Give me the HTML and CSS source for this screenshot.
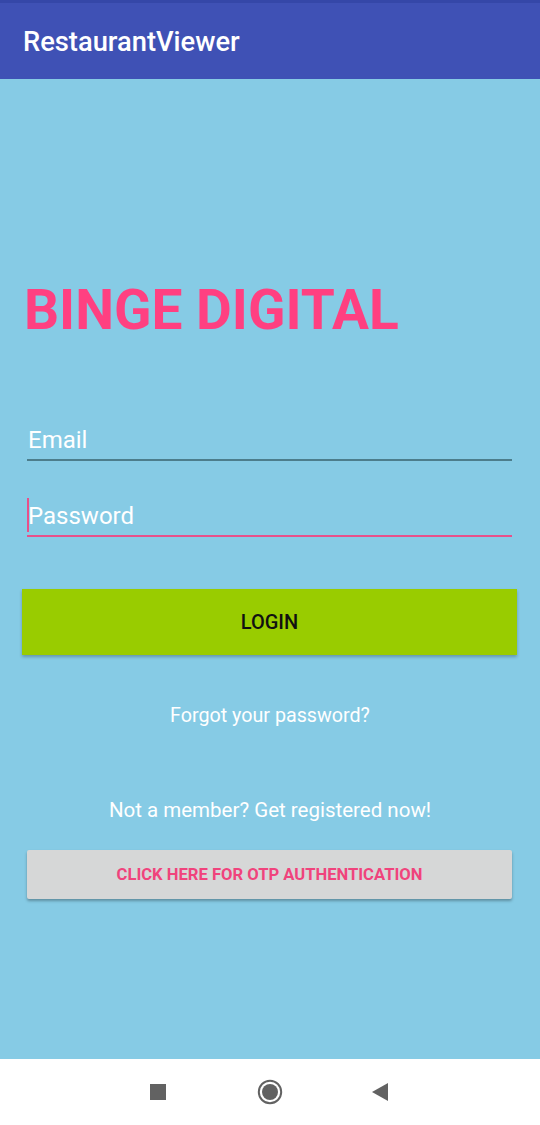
FILE: index.html
```html
<!DOCTYPE html>
<html lang="en">
<head>
<meta charset="utf-8">
<title>RestaurantViewer</title>
<link rel="stylesheet" href="styles.css">
</head>
<body>
<div class="screen">
  <header class="appbar">
    <h1 class="appbar-title">RestaurantViewer</h1>
  </header>
  <main class="content">
    <div class="brand">BINGE DIGITAL</div>
    <div class="field field-email"><span class="hint">Email</span></div>
    <div class="field field-password"><span class="cursor"></span><span class="hint">Password</span></div>
    <button class="btn-login" type="button">LOGIN</button>
    <div class="link link-forgot">Forgot your password?</div>
    <div class="link link-register">Not a member? Get registered now!</div>
    <button class="btn-otp" type="button">CLICK HERE FOR OTP AUTHENTICATION</button>
  </main>
  <nav class="navbar">
    <svg class="nav-icon nav-recent" width="18" height="18" viewBox="0 0 18 18"><rect x="1" y="1" width="16" height="16" fill="#626262"/></svg>
    <svg class="nav-icon nav-home" width="26" height="26" viewBox="0 0 26 26"><circle cx="13" cy="13" r="11.2" fill="none" stroke="#626262" stroke-width="2"/><circle cx="13" cy="13" r="8" fill="#626262"/></svg>
    <svg class="nav-icon nav-back" width="18" height="20" viewBox="0 0 18 20"><path d="M1 10 L17 1 L17 19 Z" fill="#626262"/></svg>
  </nav>
</div>
</body>
</html>
```

FILE: styles.css
```css
* { box-sizing: border-box; }
html, body { margin: 0; padding: 0; }
body {
  width: 540px;
  height: 1125px;
  font-family: Roboto, "Noto Sans", Arial, sans-serif;
  background: #ffffff;
}
.screen {
  display: flex;
  flex-direction: column;
  height: 1125px;
}
.appbar {
  height: 79px;
  background: #3f51b5;
  border-top: 3px solid #3547a8;
  display: flex;
  align-items: center;
  padding: 3px 0 0 23px;
  flex: 0 0 auto;
}
.appbar-title {
  margin: 0;
  color: #ffffff;
  font-size: 27.3px;
  font-weight: 500;
  line-height: 1;
  letter-spacing: 0;
}
.content {
  flex: 1 1 auto;
  background: #86cbe5;
  display: flex;
  flex-direction: column;
}
.brand {
  margin: 203px 0 0 24px;
  color: #ff4081;
  font-size: 55px;
  font-weight: 700;
  line-height: 57px;
}
.field {
  position: relative;
  margin: 89px 28px 0 27px;
  padding: 0 0 7px 1px;
  border-bottom: 2px solid #4c7d8c;
}
.field-password {
  margin-top: 43px;
  border-bottom-color: #e8508a;
}
.hint {
  display: block;
  color: #ffffff;
  font-size: 24px;
  line-height: 24px;
}
.cursor {
  position: absolute;
  left: 0;
  top: -6px;
  width: 2px;
  height: 34px;
  background: #e8508a;
}
.btn-login {
  margin: 52px 23px 0 22px;
  height: 66px;
  border: none;
  background: #99cc00;
  color: #111111;
  font-family: Roboto, "Noto Sans", Arial, sans-serif;
  font-size: 20px;
  font-weight: 500;
  box-shadow: 0 2px 3px rgba(0, 0, 0, 0.25);
  padding: 0;
}
.link {
  text-align: center;
  color: #ffffff;
  font-size: 20px;
  line-height: 20px;
}
.link-forgot { margin-top: 51px; font-size: 19.7px; }
.link-register { margin-top: 74px; font-size: 20.5px; }
.btn-otp {
  margin: 30px 28px 0 27px;
  height: 49px;
  border: none;
  border-radius: 2px;
  background: #d6d7d7;
  color: #f0437c;
  font-family: Roboto, "Noto Sans", Arial, sans-serif;
  font-size: 16.6px;
  font-weight: 700;
  box-shadow: 0 2px 3px rgba(0, 0, 0, 0.3);
  padding: 0;
}
.navbar {
  flex: 0 0 66px;
  background: #ffffff;
  display: flex;
  align-items: center;
  padding-left: 149px;
}
.nav-icon { display: block; }
.nav-home { margin-left: 90px; }
.nav-back { margin-left: 88px; }
```
